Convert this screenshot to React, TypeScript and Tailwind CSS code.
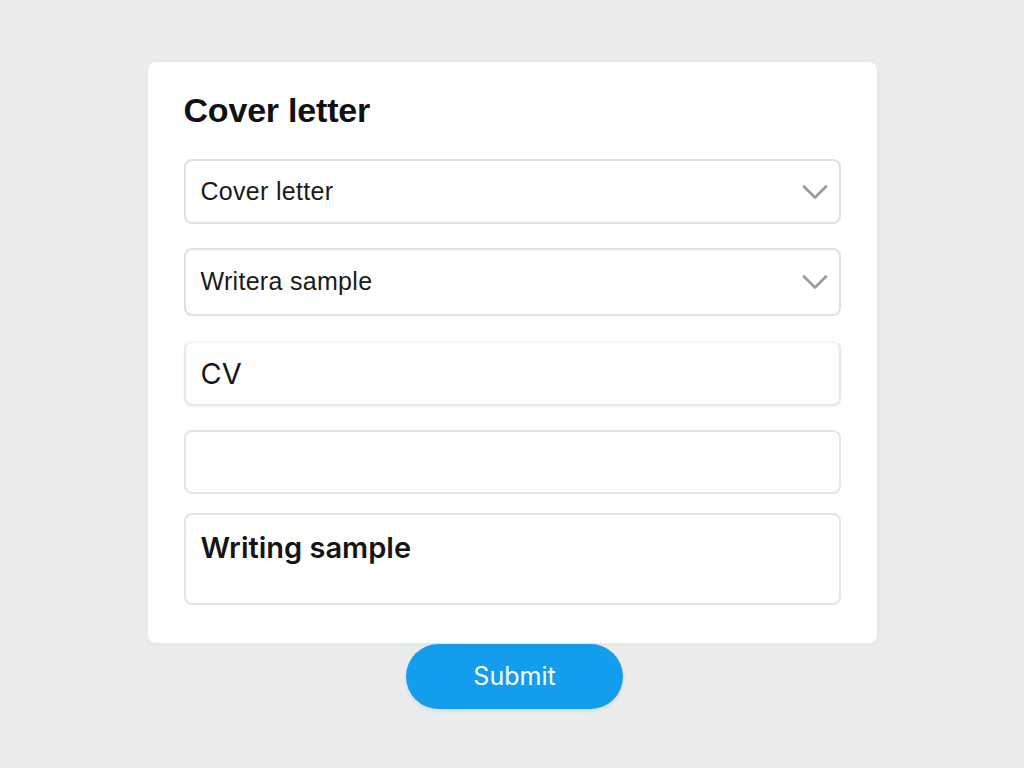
import { ChevronDown } from "lucide-react";

const selects = ["Cover letter", "Writera sample"];

export default function App() {
  return (
    <div className="min-h-screen w-full bg-[#ebecee] flex flex-col items-center pt-[62px] font-['Liberation_Sans',Arial,sans-serif]">
      <div className="w-[729px] bg-white rounded-lg shadow-[0_1px_6px_rgba(0,0,0,0.04)] px-[36px] pt-[28px] pb-[38px] flex flex-col">
        <h1 className="text-[34px] leading-[40px] font-bold text-[#111] tracking-[-0.2px]">Cover letter</h1>

        <div className="mt-[29px] flex flex-col">
          {selects.map((label, i) => (
            <div
              key={label}
              className={
                i === 0
                  ? "h-[65px] rounded-lg border-2 border-[#dfe0e2] flex items-center justify-between pl-[15px] pr-[2px]"
                  : "mt-[24px] h-[68px] rounded-lg border-2 border-[#dfe0e2] flex items-center justify-between pl-[15px] pr-[2px]"
              }
            >
              <span className="text-[25px] text-[#1a1a1a] tracking-[0.3px]">{label}</span>
              <ChevronDown className="w-[44px] h-[44px] text-[#9b9c9e]" strokeWidth={1.5} />
            </div>
          ))}

          <div className="mt-[25px] h-[65px] rounded-lg border-2 border-[#e6e7e9] border-t-[#f2f3f4] shadow-[0_1px_3px_rgba(0,0,0,0.05)] flex items-center pl-[15px] bg-[#fdfdfe]">
            <span className="text-[29px] text-[#151515] font-['Inter',sans-serif]">CV</span>
          </div>

          <div className="mt-[24px] h-[64px] rounded-lg border-2 border-[#e4e5e7]" />

          <div className="mt-[19px] h-[92px] rounded-lg border-2 border-[#e4e5e7] pl-[15px] pt-[14px]">
            <span className="text-[29px] leading-[38px] font-semibold text-[#151515] font-['Inter',sans-serif]">Writing sample</span>
          </div>
        </div>
      </div>

      <button className="mt-px ml-[5px] w-[217px] h-[65px] rounded-full bg-[#139ded] text-white text-[25px] font-['Inter',sans-serif] shadow-[0_2px_4px_rgba(0,0,0,0.08)]">
        Submit
      </button>
    </div>
  );
}
